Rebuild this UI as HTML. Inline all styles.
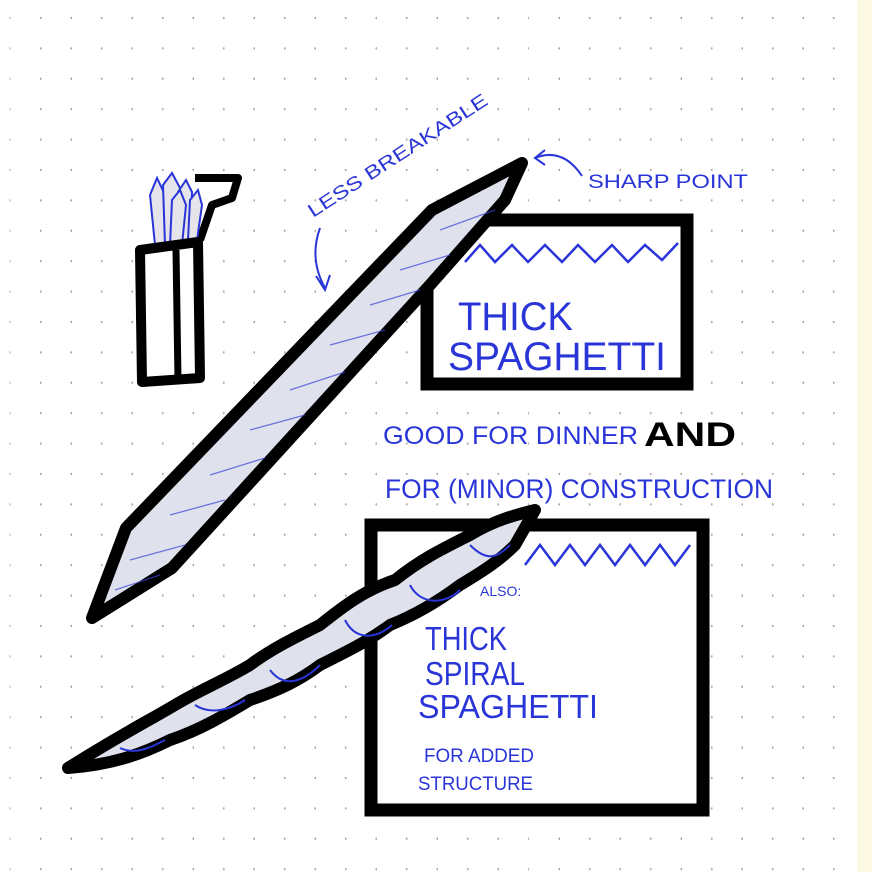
<!DOCTYPE html>
<html><head><meta charset="utf-8"><style>
html,body{margin:0;padding:0;width:872px;height:872px;overflow:hidden;background:#fff}
svg{display:block}
.b{fill:#2a35d8;font-family:"Liberation Sans",sans-serif;}
</style></head><body>
<svg width="872" height="872" viewBox="0 0 872 872" xmlns="http://www.w3.org/2000/svg">
<defs>
<pattern id="dots" x="10.5" y="3" width="30.5" height="30.4" patternUnits="userSpaceOnUse">
<circle cx="30.5" cy="15" r="1.2" fill="#a8a49a"/>
</pattern>
</defs>
<rect width="872" height="872" fill="#fff"/>
<rect x="857" width="15" height="872" fill="#fcf9e4"/>
<rect width="855" height="872" fill="url(#dots)"/>

<!-- top rectangle -->
<rect x="427" y="220" width="260" height="164" fill="#fff" stroke="#000" stroke-width="13"/>
<polyline points="465,262 480,245 495,262 512,245 528,262 545,245 562,262 578,245 595,262 612,245 628,262 645,245 662,260 678,243" fill="none" stroke="#2a35d8" stroke-width="2.5"/>
<text class="b" x="458" y="330" font-size="40" textLength="115" lengthAdjust="spacingAndGlyphs">THICK</text>
<text class="b" x="448" y="370" font-size="40" textLength="218" lengthAdjust="spacingAndGlyphs">SPAGHETTI</text>

<!-- straight stick -->
<polygon points="522,163 432,210 126,528 92,618 172,568 430,285 505,200" fill="#dfe2ec" stroke="#000" stroke-width="12" stroke-linejoin="round"/>
<g stroke="#3a46d8" stroke-width="1.3" opacity="0.7">
<line x1="440" y1="230" x2="495" y2="210"/><line x1="400" y1="270" x2="450" y2="255"/><line x1="370" y1="305" x2="420" y2="290"/><line x1="330" y1="345" x2="385" y2="330"/><line x1="290" y1="390" x2="345" y2="372"/><line x1="250" y1="430" x2="305" y2="415"/><line x1="210" y1="475" x2="265" y2="458"/><line x1="170" y1="515" x2="225" y2="500"/><line x1="130" y1="560" x2="185" y2="545"/><line x1="115" y1="590" x2="160" y2="575"/>
</g>

<!-- cup -->
<path d="M195,178 L238,178 L232,198 L212,205 L200,240" fill="#fff" stroke="#000" stroke-width="8" stroke-linejoin="round"/>
<g fill="#e4e4ea" stroke="#2a35d8" stroke-width="2">
<path d="M155,245 L150,195 L157,178 L165,195 L165,245Z"/>
<path d="M165,245 L163,185 L172,173 L180,188 L178,245Z"/>
<path d="M178,245 L178,192 L186,180 L192,192 L190,245Z"/>
<path d="M170,245 L172,200 L180,190 L186,205 L182,245Z"/>
<path d="M188,240 L190,200 L198,190 L202,205 L197,240Z"/>
</g>
<path d="M140,250 L198,242 L200,378 L142,382 Z" fill="#fff" stroke="#000" stroke-width="10" stroke-linejoin="round"/>
<line x1="176" y1="250" x2="178" y2="380" stroke="#000" stroke-width="7"/>

<text class="b" transform="translate(313,218) rotate(-33)" font-size="19" textLength="210" lengthAdjust="spacingAndGlyphs">LESS BREAKABLE</text>
<path d="M320,228 C312,250 315,270 325,288 M316,276 L325,290 L330,275" fill="none" stroke="#2a35d8" stroke-width="2"/>
<path d="M582,176 C570,158 555,150 535,158 M545,150 L535,158 L545,165" fill="none" stroke="#2a35d8" stroke-width="2"/>
<text class="b" x="588" y="188" font-size="19" textLength="160" lengthAdjust="spacingAndGlyphs">SHARP POINT</text>

<text class="b" x="383" y="444" font-size="25" textLength="255" lengthAdjust="spacingAndGlyphs">GOOD FOR DINNER</text>
<text x="644" y="446" font-size="34" font-weight="bold" font-family="Liberation Sans,sans-serif" fill="#000" textLength="92" lengthAdjust="spacingAndGlyphs">AND</text>
<text class="b" x="385" y="498" font-size="27" textLength="388" lengthAdjust="spacingAndGlyphs">FOR (MINOR) CONSTRUCTION</text>

<!-- bottom rectangle -->
<rect x="371" y="525" width="332" height="285" fill="#fff" stroke="#000" stroke-width="13"/>
<polyline points="525,565 540,545 555,565 570,545 585,565 600,545 615,565 630,545 645,565 660,545 675,565 690,545" fill="none" stroke="#2a35d8" stroke-width="2.5"/>
<text class="b" x="480" y="596" font-size="14">ALSO:</text>
<text class="b" x="425" y="650" font-size="33" textLength="82" lengthAdjust="spacingAndGlyphs">THICK</text>
<text class="b" x="425" y="685" font-size="33" textLength="100" lengthAdjust="spacingAndGlyphs">SPIRAL</text>
<text class="b" x="418" y="718" font-size="33" textLength="180" lengthAdjust="spacingAndGlyphs">SPAGHETTI</text>
<text class="b" x="424" y="762" font-size="19" textLength="110" lengthAdjust="spacingAndGlyphs">FOR ADDED</text>
<text class="b" x="418" y="790" font-size="19" textLength="115" lengthAdjust="spacingAndGlyphs">STRUCTURE</text>

<!-- spiral stick -->
<path d="M535,510 C515,515 495,520 470,535 C440,550 420,560 395,580 C365,590 345,605 320,625 C290,640 270,650 250,665 C225,680 200,690 175,705 C150,720 120,735 68,768 C110,765 140,755 170,740 C200,730 225,715 250,700 C280,690 300,680 320,665 C350,650 370,640 390,625 C415,615 440,600 460,585 C485,570 500,560 515,545 Z" fill="#dfe2ec" stroke="#000" stroke-width="12" stroke-linejoin="round"/>
<g fill="none" stroke="#2a35d8" stroke-width="2">
<path d="M470,545 C485,560 495,560 510,545"/><path d="M410,585 C420,605 445,605 460,590"/><path d="M345,620 C355,640 375,640 392,625"/><path d="M270,670 C285,690 305,680 320,665"/><path d="M195,705 C210,715 230,710 245,700"/><path d="M120,748 C135,755 150,748 165,740"/>
</g>
</svg>
</body></html>
